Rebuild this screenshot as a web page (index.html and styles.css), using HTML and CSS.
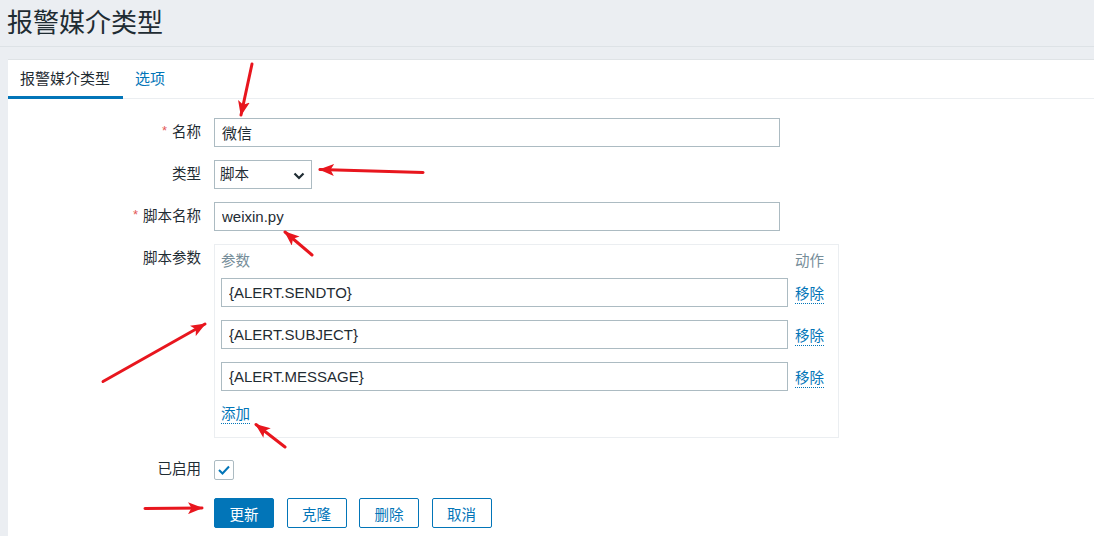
FILE: index.html
```html
<!DOCTYPE html>
<html lang="zh">
<head>
<meta charset="utf-8">
<title>报警媒介类型</title>
<link rel="stylesheet" href="styles.css">
</head>
<body>
<header class="page-header">
  <h1 class="page-title">报警媒介类型</h1>
</header>
<main class="panel">
  <nav class="tabs">
    <a class="tab tab-active">报警媒介类型</a>
    <a class="tab">选项</a>
  </nav>
  <form class="form">
    <div class="row">
      <label class="lbl"><span class="req">*</span>名称</label>
      <div class="field"><input class="text text-wide" type="text" value="微信"></div>
    </div>
    <div class="row">
      <label class="lbl">类型</label>
      <div class="field">
        <div class="select"><span>脚本</span>
          <svg class="chev" width="12" height="8" viewBox="0 0 12 8"><path d="M1.5 1.5 L6 6 L10.5 1.5" fill="none" stroke="#1f2c33" stroke-width="2.2"/></svg>
        </div>
      </div>
    </div>
    <div class="row">
      <label class="lbl"><span class="req">*</span>脚本名称</label>
      <div class="field"><input class="text text-wide" type="text" value="weixin.py"></div>
    </div>
    <div class="row row-top">
      <label class="lbl">脚本参数</label>
      <div class="field">
        <div class="params">
          <div class="params-grid">
            <div class="ph">参数</div>
            <div class="ph ph-right">动作</div>
            <input class="text text-param" type="text" value="{ALERT.SENDTO}">
            <a class="link link-remove">移除</a>
            <input class="text text-param" type="text" value="{ALERT.SUBJECT}">
            <a class="link link-remove">移除</a>
            <input class="text text-param" type="text" value="{ALERT.MESSAGE}">
            <a class="link link-remove">移除</a>
          </div>
          <div class="params-add"><a class="link">添加</a></div>
        </div>
      </div>
    </div>
    <div class="row row-check">
      <label class="lbl">已启用</label>
      <div class="field">
        <span class="checkbox">
          <svg width="14" height="12" viewBox="0 0 14 12"><path d="M2 6 L5.5 9.5 L12 2.5" fill="none" stroke="#0275b8" stroke-width="2"/></svg>
        </span>
      </div>
    </div>
    <div class="row row-buttons">
      <div class="lbl"></div>
      <div class="field buttons">
        <button type="button" class="btn btn-primary">更新</button>
        <button type="button" class="btn">克隆</button>
        <button type="button" class="btn">删除</button>
        <button type="button" class="btn">取消</button>
      </div>
    </div>
  </form>
</main>
<svg class="annotations" width="1094" height="536" viewBox="0 0 1094 536">
  <defs>
    <marker id="ah" markerUnits="userSpaceOnUse" markerWidth="16" markerHeight="12" refX="14" refY="6" orient="auto">
      <path d="M0 0 L15 6 L0 12 L3.5 6 Z" fill="#e8161e"/>
    </marker>
  </defs>
  <g stroke="#e8161e" stroke-width="3" stroke-linecap="round" fill="none">
    <line x1="252" y1="64" x2="241" y2="115" marker-end="url(#ah)"/>
    <line x1="423" y1="172.5" x2="320" y2="169.5" marker-end="url(#ah)"/>
    <line x1="103" y1="381.5" x2="205" y2="324" marker-end="url(#ah)"/>
    <line x1="312" y1="255" x2="285" y2="232" marker-end="url(#ah)"/>
    <line x1="285" y1="447" x2="256" y2="424.5" marker-end="url(#ah)"/>
    <line x1="145" y1="508.5" x2="202" y2="508" marker-end="url(#ah)"/>
  </g>
</svg>
</body>
</html>
```
FILE: styles.css
```css
* { box-sizing: border-box; }
html, body {
  margin: 0;
  padding: 0;
}
body {
  background: #ebeef2;
  font-family: "Liberation Sans", Arial, "Noto Sans CJK SC", sans-serif;
  font-size: 14.5px;
  color: #1f2c33;
  width: 1094px;
  height: 536px;
  overflow: hidden;
  position: relative;
}
.page-header {
  height: 47px;
  border-bottom: 1px solid #dde2e6;
  padding-left: 7px;
}
.page-title {
  margin: 0;
  font-size: 26px;
  font-weight: normal;
  line-height: 46px;
  color: #1f2c33;
}
.panel {
  margin: 12px 0 0 8px;
  background: #ffffff;
  border-top: 1px solid #dfe3e6;
  height: 477px;
  overflow: hidden;
}
.tabs {
  display: flex;
  height: 39px;
  border-bottom: 1px solid #ebeef1;
}
.tab {
  display: block;
  height: 39px;
  padding: 1px 13px 0 12px;
  line-height: 35px;
  font-size: 15px;
  color: #0275b8;
  border-bottom: 3px solid transparent;
}
.tab-active {
  color: #1f2c33;
  border-bottom-color: #0275b8;
}
.form {
  padding-top: 19px;
}
.row {
  display: flex;
  align-items: center;
  margin-bottom: 13px;
}
.row-top { align-items: flex-start; }
.row-check { margin-top: 17px; margin-bottom: 14px; }
.lbl {
  width: 193px;
  flex: none;
  text-align: right;
  line-height: 29px;
  margin-right: 13px;
}
.req {
  color: #e45959;
  font-size: 13px;
  margin-right: 5px;
  position: relative;
  top: -2px;
}
.field { flex: none; }
.text {
  display: block;
  height: 29px;
  border: 1px solid #acbbc2;
  border-radius: 0;
  padding: 0 7px;
  font-family: inherit;
  font-size: 15px;
  color: #1f2c33;
  background: #ffffff;
  outline: none;
  margin: 0;
}
.text-wide { width: 566px; }
.select {
  width: 98px;
  height: 29px;
  border: 1px solid #acbbc2;
  display: flex;
  align-items: center;
  justify-content: space-between;
  padding: 0 6px 0 5px;
  line-height: 27px;
}
.chev { margin-top: 3px; }
.params {
  width: 625px;
  border: 1px solid #ebeef1;
  padding: 0 13px 13px 6px;
}
.params-grid {
  display: grid;
  grid-template-columns: 567px 1fr;
  column-gap: 7px;
  row-gap: 13px;
}
.ph {
  line-height: 33px;
  color: #768d99;
  height: 33px;
}
.params-grid .ph { margin-bottom: -13px; }
.ph-right { text-align: left; }
.text-param { width: 567px; }
.link {
  display: inline-block;
  line-height: 17px;
  color: #0275b8;
  border-bottom: 1px dotted #0275b8;
  cursor: pointer;
}
.link-remove {
  justify-self: start;
  align-self: end;
  margin-bottom: 3px;
}
.params-add {
  margin-top: 15px;
  height: 18px;
}
.checkbox {
  width: 20px;
  height: 20px;
  border: 1px solid #acbbc2;
  border-radius: 2px;
  display: flex;
  align-items: center;
  justify-content: center;
  background: #fff;
}
.buttons {
  display: flex;
  gap: 12.5px;
}
.btn {
  width: 60px;
  height: 30px;
  border: 1px solid #0275b8;
  border-radius: 2px;
  background: #ffffff;
  color: #0275b8;
  font-family: inherit;
  font-size: 14.5px;
  padding: 0;
  margin: 0;
}
.btn-primary {
  background: #0275b8;
  color: #ffffff;
}
.annotations {
  position: absolute;
  left: 0;
  top: 0;
  pointer-events: none;
}
```
